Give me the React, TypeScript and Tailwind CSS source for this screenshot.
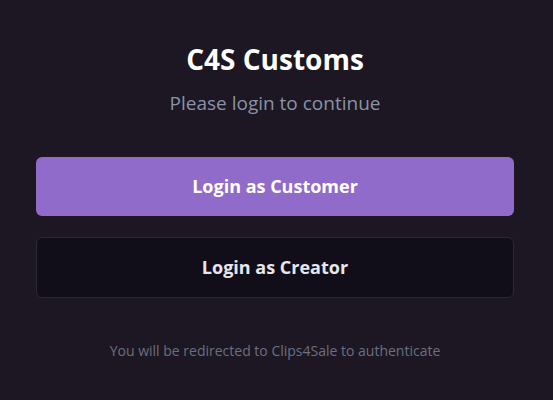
export default function App() {
  return (
    <div
      className="min-h-[400px] w-full bg-[#1c1722] pl-9 pt-[38px]"
      style={{ fontFamily: '"Open Sans", "Noto Sans", sans-serif' }}
    >
      <div className="flex w-[478px] flex-col items-center">
        <h1 className="text-[28px] font-bold leading-[42px] text-white">C4S Customs</h1>
        <p className="mt-[1px] text-[19px] leading-[44px] text-[#8a93a6]">Please login to continue</p>
      </div>

      <div className="mt-[32px] flex w-[478px] flex-col gap-[21px]">
        <button className="h-[59px] w-full rounded-md bg-[#916bc9] text-[18px] font-bold text-white">
          Login as Customer
        </button>
        <button className="h-[61px] w-full rounded-md border border-[#2c2836] bg-[#110e1a] text-[18px] font-bold text-[#e5e7eb]">
          Login as Creator
        </button>
      </div>

      <p className="mt-[42px] w-[478px] text-center text-[14px] text-[#6b6f80]">
        You will be redirected to Clips4Sale to authenticate
      </p>
    </div>
  )
}
